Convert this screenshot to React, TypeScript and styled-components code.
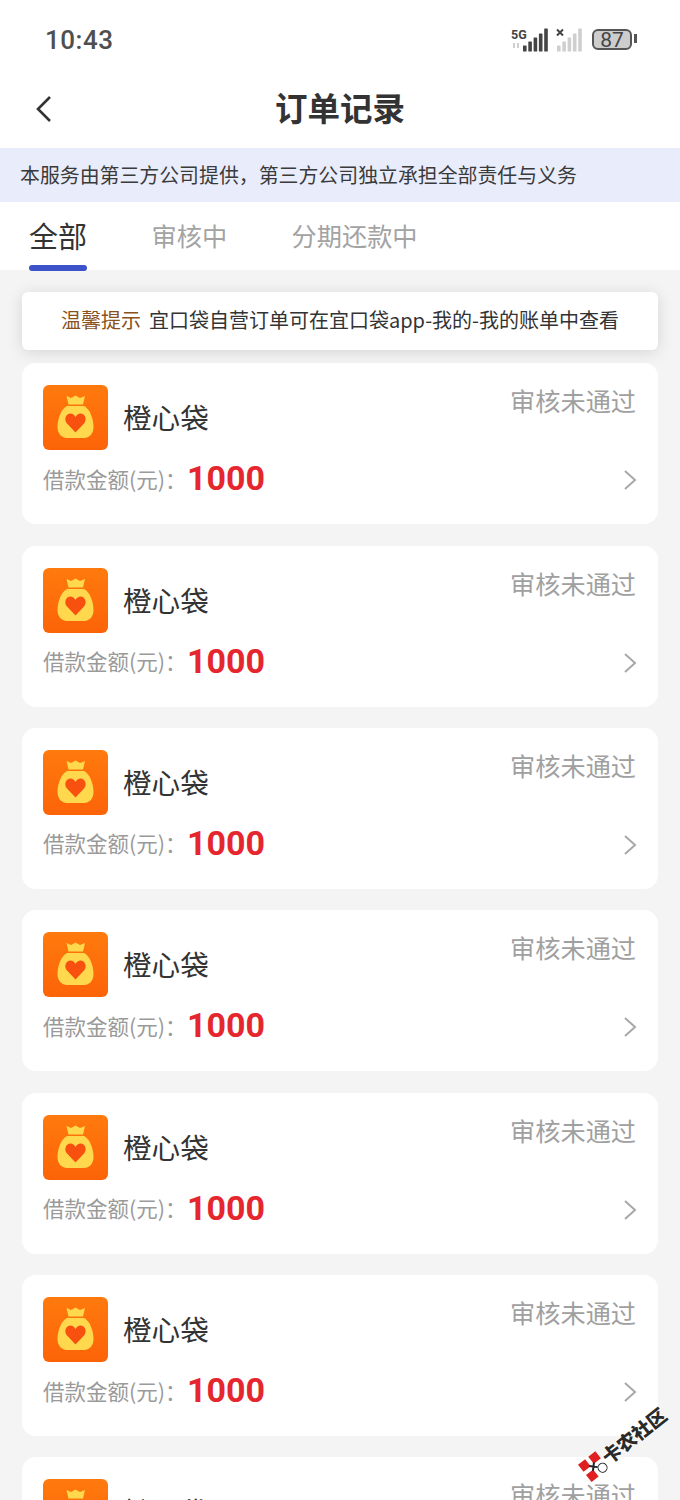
import React from "react"
import styled, {createGlobalStyle} from 'styled-components'

const GlobalStyle = createGlobalStyle`
  html, body {
    margin: 0;
    padding: 0;
    background: #f4f4f4;
  }
  body {
    font-family: "Noto Sans CJK SC", "Noto Sans", Roboto, sans-serif;
  }
`;

const Page = styled.div`
  position: relative;
  width: 680px;
  height: 1500px;
  overflow: hidden;
  background: #f4f4f4;
`;

const Header = styled.div`
  background: #fff;
`;

const StatusBar = styled.div`
  height: 78px;
  box-sizing: border-box;
  padding: 1px 48px 0 45px;
  display: flex;
  align-items: center;
  justify-content: space-between;
`;

const Time = styled.span`
  font-family: Roboto, sans-serif;
  font-size: 26px;
  font-weight: 500;
  letter-spacing: 0.5px;
  color: #4f4f4f;
`;

const StatusIcons = styled.div`
  display: flex;
  align-items: center;
`;

const Battery = styled.div`
  width: 40px;
  height: 21px;
  box-sizing: border-box;
  margin-left: 9px;
  border: 2px solid #555;
  border-radius: 6px;
  background: #cdcdcd;
  display: flex;
  align-items: center;
  justify-content: center;
  position: relative;
  font-family: Roboto, sans-serif;
  font-size: 21px;
  color: #444;
  &::after {
    content: "";
    position: absolute;
    right: -7px;
    top: 3px;
    width: 3px;
    height: 9px;
    background: #555;
  }
`;

const NavBar = styled.div`
  height: 70px;
  position: relative;
  display: flex;
  align-items: center;
  justify-content: center;
`;

const BackIcon = styled.svg`
  position: absolute;
  left: 34px;
  top: 16px;
`;

const NavTitle = styled.h1`
  margin: 0 0 11px;
  font-size: 32.5px;
  font-weight: 700;
  color: #333;
  line-height: 1;
`;

const Notice = styled.div`
  height: 54px;
  box-sizing: border-box;
  padding: 0 0 2px 20px;
  display: flex;
  align-items: center;
  background: #e9edfb;
  font-size: 19.9px;
  color: #3a3a3a;
`;

const Tabs = styled.div`
  height: 68px;
  display: flex;
  padding-left: 29px;
  gap: 64.5px;
`;

const Tab = styled.div<{$active?: boolean}>`
  position: relative;
  height: 68px;
  box-sizing: border-box;
  padding-top: 12px;
  line-height: 42px;
  font-weight: 400;
  color: ${props => props.$active ? "#333" : "#a3a3a3"};
  font-size: ${props => props.$active ? "29px" : "25.2px"};
  ${props => props.$active && `
    &::after {
      content: "";
      position: absolute;
      left: 0;
      right: 0;
      bottom: -1px;
      height: 6px;
      border-radius: 3px;
      background: #3b52c8;
    }
  `}
`;

const List = styled.div`
  padding: 22px 22px 0;
  display: flex;
  flex-direction: column;
`;

const TipCard = styled.div`
  height: 58px;
  box-sizing: border-box;
  padding-bottom: 4px;
  margin-bottom: 13.3px;
  background: #fff;
  border-radius: 6px;
  box-shadow: 0 2px 16px rgba(0, 0, 0, 0.13);
  display: flex;
  align-items: center;
  justify-content: center;
  font-size: 20px;
  color: #333;
`;

const TipLabel = styled.span`
  color: #8a5220;
  margin-right: 8px;
`;

const Card = styled.div`
  flex: none;
  height: 161px;
  margin-bottom: 21.35px;
  box-sizing: border-box;
  padding: 22px 22px 0 21px;
  background: #fff;
  border-radius: 14px;
  position: relative;
`;

const CardTop = styled.div`
  display: flex;
  align-items: flex-start;
`;

const Logo = styled.svg`
  flex: none;
`;

const CardName = styled.span`
  margin-left: 15px;
  margin-top: 11px;
  font-size: 28.6px;
  line-height: 42px;
  color: #333;
`;

const Status = styled.span`
  margin-left: auto;
  margin-top: -3px;
  font-size: 25.2px;
  line-height: 36px;
  color: #a0a0a0;
`;

const CardBottom = styled.div`
  display: flex;
  align-items: center;
  height: 36px;
  margin-top: 10px;
`;

const AmountLabel = styled.span`
  font-size: 21.5px;
  color: #9a9a9a;
  width: 144px;
  white-space: nowrap;
`;

const Amount = styled.span`
  font-family: Roboto, "Liberation Sans", sans-serif;
  font-size: 34px;
  font-weight: 700;
  color: #e5262e;
`;

const Chevron = styled.svg`
  margin-left: auto;
  margin-right: -1px;
  position: relative;
  top: 2px;
`;

const Watermark = styled.div`
  position: absolute;
  left: 584px;
  top: 1461px;
  display: flex;
  align-items: center;
  gap: 1px;
  transform: rotate(-38deg);
  transform-origin: 0 50%;
  font-size: 19px;
  line-height: 26px;
  font-weight: 900;
  color: #2a2a2a;
  white-space: nowrap;
  text-shadow: 0 0 2px #fff, 0 0 2px #fff;
`;

const SignalBars = ({color}: {color: string}) => (
    <>
        {[[0, 6], [5.3, 10], [10.6, 14], [15.9, 18], [21.2, 23]].map(([x, h], i) => (
            <rect key={i} x={x} y={23 - h} width="3.6" height={h} rx="0.6" fill={color}/>
        ))}
    </>
);

const LogoIcon = () => (
    <Logo width="65" height="65" viewBox="0 0 65 65">
        <defs>
            <linearGradient id="logoBg" x1="0" y1="0" x2="0" y2="1">
                <stop offset="0" stopColor="#ff7a0e"/>
                <stop offset="1" stopColor="#fc6308"/>
            </linearGradient>
        </defs>
        <rect width="65" height="65" rx="6" fill="url(#logoBg)"/>
        <path d="M23.5 11 L28 13 L32.5 10.5 L37 13 L42 11 L40 19.5 H25.5 Z" fill="#ffd84e"/>
        <path d="M24 21 H41 C47 24 50.5 34 50.5 42 C50.5 49 46 53 41 53 H24 C19 53 14.5 49 14.5 42 C14.5 34 18 24 24 21 Z" fill="#ffd84e"/>
        <path d="M32.5 47.5 L24 38.5 C20.5 34.5 23 28.5 27.5 28.5 C29.6 28.5 31.4 29.8 32.5 32 C33.6 29.8 35.4 28.5 37.5 28.5 C42 28.5 44.5 34.5 41 38.5 Z" fill="#f8500f"/>
    </Logo>
);

const OrderCard = () => (
    <Card>
        <CardTop>
            <LogoIcon/>
            <CardName>橙心袋</CardName>
            <Status>审核未通过</Status>
        </CardTop>
        <CardBottom>
            <AmountLabel>借款金额(元)：</AmountLabel>
            <Amount>1000</Amount>
            <Chevron width="14" height="22" viewBox="0 0 14 22" fill="none">
                <path d="M2 2 L12 11 L2 20" stroke="#a8a8a8" strokeWidth="2"/>
            </Chevron>
        </CardBottom>
    </Card>
);

const App = () => {
    return (
        <Page>
            <GlobalStyle/>
            <Header>
                <StatusBar>
                    <Time>10:43</Time>
                    <StatusIcons>
                        <svg width="72" height="24" viewBox="0 0 72 24">
                            <text x="0" y="11" fontFamily="Roboto, sans-serif" fontSize="12.5" fontWeight="700" fill="#444">5G</text>
                            <path d="M3 20 V15 M7 15 V20" stroke="#cfcfcf" strokeWidth="2"/>
                            <g transform="translate(12 0.5)"><SignalBars color="#444"/></g>
                            <path d="M46 1.5 L52 7.5 M52 1.5 L46 7.5" stroke="#444" strokeWidth="2"/>
                            <g transform="translate(46 0.5)"><SignalBars color="#cfcfcf"/></g>
                        </svg>
                        <Battery>87</Battery>
                    </StatusIcons>
                </StatusBar>
                <NavBar>
                    <BackIcon width="20" height="30" viewBox="0 0 20 30" fill="none">
                        <path d="M16 3 L4 15 L16 27" stroke="#333" strokeWidth="2.6"/>
                    </BackIcon>
                    <NavTitle>订单记录</NavTitle>
                </NavBar>
                <Notice>本服务由第三方公司提供，第三方公司独立承担全部责任与义务</Notice>
                <Tabs>
                    <Tab $active>全部</Tab>
                    <Tab>审核中</Tab>
                    <Tab>分期还款中</Tab>
                </Tabs>
            </Header>
            <List>
                <TipCard>
                    <TipLabel>温馨提示</TipLabel>
                    宜口袋自营订单可在宜口袋app-我的-我的账单中查看
                </TipCard>
                {[0, 1, 2, 3, 4, 5, 6].map(i => <OrderCard key={`order-${i}`}/>)}
            </List>
            <Watermark>
                <svg width="24" height="24" viewBox="0 0 24 24">
                    <rect x="1" y="1" width="9" height="9" fill="#e02020"/>
                    <rect x="14" y="1" width="9" height="9" fill="#e02020"/>
                    <rect x="1" y="14" width="9" height="9" fill="#e02020"/>
                    <rect x="14" y="14" width="9" height="9" rx="4.5" fill="#fff" stroke="#222" strokeWidth="1"/>
                    <path d="M9 9 L15 15 M15 9 L9 15" stroke="#222" strokeWidth="2"/>
                </svg>
                卡农社区
            </Watermark>
        </Page>
    )
};

export default App
